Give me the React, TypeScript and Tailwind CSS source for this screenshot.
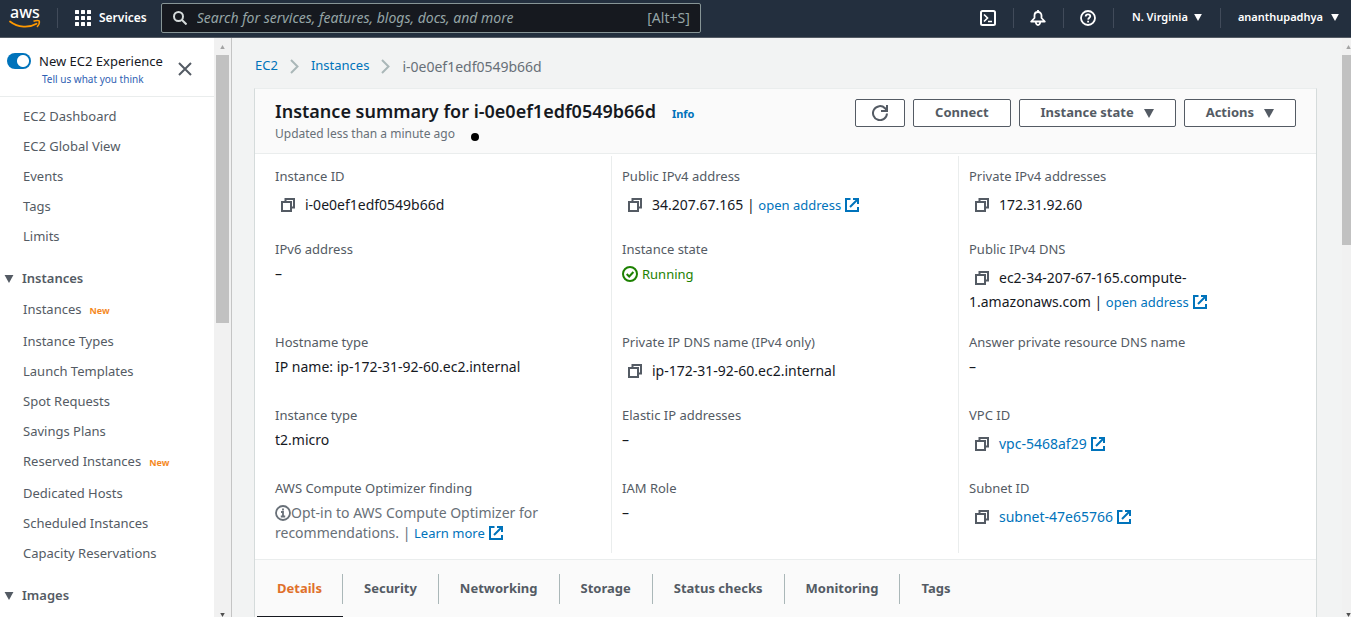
import type { ReactNode } from "react";

function Caret({ className = "" }: { className?: string }) {
  return (
    <svg viewBox="0 0 10 9" className={className} fill="currentColor" aria-hidden="true">
      <path d="M0 0h10L5 9z" />
    </svg>
  );
}

function CopyIcon() {
  return (
    <svg viewBox="0 0 14 14" className="size-3.5" fill="none" stroke="#545b64" strokeWidth="2" aria-hidden="true">
      <path d="M1 4h9v9H1z" />
      <path d="M4.500 4V1H13v8.500H10" />
    </svg>
  );
}

function ExternalIcon() {
  return (
    <svg viewBox="0 0 14 14" className="ml-1 inline size-3.5 align-[-2px]" fill="none" stroke="#0073bb" strokeWidth="2" aria-hidden="true">
      <path d="M5.500 1H1v12h12V9" />
      <path d="M8 1h5v5M13 1 5 9" />
    </svg>
  );
}

function Logo() {
  return (
    <svg viewBox="0 0 32 28" className="h-7 w-8 overflow-visible" role="img" aria-label="aws">
      <text x="2" y="14" fill="#fff" fontFamily="Noto Sans, sans-serif" fontWeight="500" fontSize="16">aws</text>
      <path d="M2 17.500c8 6.200 19 6.600 26.500 2.200" fill="none" stroke="#ff9900" strokeWidth="1.800" strokeLinecap="round" />
      <path d="M25.500 17.300c2.500-.9 5-1 5.800-.3.300 1.500-.6 4.300-2.300 6" fill="none" stroke="#ff9900" strokeWidth="1.500" />
    </svg>
  );
}

function Divider() {
  return <span className="h-5 w-px bg-[#414b5a]" />;
}

function TopBar() {
  const iconButton = "flex w-[49px] items-center justify-center";
  return (
    <header className="flex h-[38px] shrink-0 items-center border-b border-[#545b64] bg-[#232f3e] pb-0.5 text-white">
      <a href="#home" className="ml-2 mr-[17px]"><Logo /></a>
      <Divider />
      <button className="ml-[17px] flex items-center gap-2 text-[12px] font-semibold">
        <svg viewBox="0 0 16 16" className="size-4" fill="#fff" aria-hidden="true">
          {[0, 6, 12].map((y) => [0, 6, 12].map((x) => <rect key={`${x}-${y}`} x={x} y={y} width="4" height="4" rx="0.500" />))}
        </svg>
        Services
      </button>
      <label className="ml-3.5 flex h-[30px] w-[540px] items-center rounded-xs border border-[#879596] bg-[#16191f] pl-[11px] pr-2.5">
        <svg viewBox="0 0 14 14" className="mr-2.5 size-3.5 shrink-0" fill="none" stroke="#d5dbdb" strokeWidth="2" aria-hidden="true">
          <circle cx="5.500" cy="5.500" r="4.500" />
          <path d="m9 9 4.500 4.500" />
        </svg>
        <input
          aria-label="Search"
          placeholder="Search for services, features, blogs, docs, and more"
          className="min-w-0 flex-1 bg-transparent text-[14px] outline-none placeholder:italic placeholder:text-[#95a5a6]"
        />
        <span className="text-[14px] text-[#95a5a6]">[Alt+S]</span>
      </label>
      <div className="ml-auto flex items-center">
        <button aria-label="CloudShell" className={iconButton}>
          <svg viewBox="0 0 16 16" className="size-4" fill="none" stroke="#fff" strokeWidth="2" aria-hidden="true">
            <rect x="1" y="1" width="14" height="14" rx="1.500" />
            <path d="m4 4.500 3.500 3.500L4 11.500M8 11.500h4" strokeWidth="1.700" />
          </svg>
        </button>
        <Divider />
        <button aria-label="Notifications" className={iconButton}>
          <svg viewBox="0 0 16 16" className="size-4" fill="none" stroke="#fff" strokeWidth="1.800" strokeLinejoin="round" aria-hidden="true">
            <path d="M8 0v2M8 2C5.800 2 4.500 3.600 4.500 5.500V8L1.200 11.500h13.600L11.500 8V5.500C11.500 3.600 10.200 2 8 2z" />
            <path d="M5.800 12c.2 2 1 3 2.200 3s2-1 2.200-3" />
          </svg>
        </button>
        <Divider />
        <button aria-label="Help" className={iconButton}>
          <svg viewBox="0 0 16 16" className="size-4" fill="none" stroke="#fff" strokeWidth="1.800" aria-hidden="true">
            <circle cx="8" cy="8" r="7" />
            <path d="M5.700 6.500C5.700 5.100 6.700 4.300 8 4.300s2.300.8 2.300 2S8.300 8 8.100 9.700M8.100 10.700v1.800" />
          </svg>
        </button>
        <Divider />
        <button className="flex items-center gap-1.5 px-[18px] text-[11px] font-semibold">
          N. Virginia <Caret className="h-[7px] w-2" />
        </button>
        <Divider />
        <button className="flex items-center gap-2 pl-[17px] pr-3 text-[11px] font-semibold">
          ananthupadhya <Caret className="h-[7px] w-2" />
        </button>
      </div>
    </header>
  );
}

function NavItem({ label, isNew }: { label: string; isNew?: boolean }) {
  return (
    <li className={isNew ? "mb-0.5" : ""}>
      <a href="#nav" className="flex h-[30px] items-center pl-[23px] text-[13px] text-[#545b64]">
        {label}
        {isNew && <span className="ml-2 pt-0.5 text-[9px] font-bold text-[#f58a1f]">New</span>}
      </a>
    </li>
  );
}

function NavSection({ title, children }: { title: string; children?: ReactNode }) {
  return (
    <section className="mt-[11px]">
      <button className="flex h-8 items-center gap-2 pl-1 text-[13px] font-semibold text-[#545b64]">
        <Caret className="h-2 w-2.5" />
        {title}
      </button>
      <ul>{children}</ul>
    </section>
  );
}

function Sidebar() {
  return (
    <aside className="flex w-[232px] shrink-0 border-r border-[#c4c4c4] bg-white">
      <div className="min-w-0 flex-1 overflow-hidden">
        <div className="flex h-[59px] items-center border-b border-[#eaeded] pl-[7px]">
          <input
            id="experience"
            type="checkbox"
            role="switch"
            defaultChecked
            className="mb-3 h-4 w-6 shrink-0 appearance-none rounded-full bg-[#0073bb] bg-[radial-gradient(circle_at_16px_8px,white_5.500px,transparent_6.500px)]"
          />
          <div className="ml-2 whitespace-nowrap pt-[3px]">
            <label htmlFor="experience" className="block text-[13px] leading-5 text-[#16191f]">New EC2 Experience</label>
            <a href="#feedback" className="ml-[3px] block text-[10px] leading-4 text-[#2f5fb3]">Tell us what you think</a>
          </div>
          <button aria-label="Close" className="ml-auto mr-[22px] mt-1">
            <svg viewBox="0 0 14 14" className="size-3.5" stroke="#545b64" strokeWidth="2" aria-hidden="true">
              <path d="m1 1 12 12M13 1 1 13" />
            </svg>
          </button>
        </div>
        <nav aria-label="EC2">
          <ul className="pt-[5px]">
            {["EC2 Dashboard", "EC2 Global View", "Events", "Tags", "Limits"].map((l) => <NavItem key={l} label={l} />)}
          </ul>
          <NavSection title="Instances">
            <NavItem label="Instances" isNew />
            <NavItem label="Instance Types" />
            <NavItem label="Launch Templates" />
            <NavItem label="Spot Requests" />
            <NavItem label="Savings Plans" />
            <NavItem label="Reserved Instances" isNew />
            <NavItem label="Dedicated Hosts" />
            <NavItem label="Scheduled Instances" />
            <NavItem label="Capacity Reservations" />
          </NavSection>
          <NavSection title="Images" />
        </nav>
      </div>
      <div className="flex w-[17px] flex-col items-center bg-[#f1f1f1]" aria-hidden="true">
        <Caret className="mb-1.5 mt-[7px] h-1 w-[7px] rotate-180 text-[#a3a3a3]" />
        <div className="h-[268px] w-[13px] bg-[#c1c1c1]" />
        <Caret className="mt-auto h-1 w-[7px] text-[#505050]" />
      </div>
    </aside>
  );
}

function Field({ label, copy, children }: { label: string; copy?: boolean; children?: ReactNode }) {
  return (
    <div className="min-h-[73px] border-[#eaeded] px-2.5 pb-2 pt-2.5 text-[14px] [&:not(:nth-child(3n))]:border-r [&:nth-child(n+13)]:pb-2.5">
      <dt className="text-[13px] leading-5 text-[#545b64]">{label}</dt>
      {copy ? (
        <dd className="mt-[7px] leading-6 text-[#16191f]">
          <button aria-label={`Copy ${label}`} className="ml-1.5 mr-2.5 inline-block align-[-2px]"><CopyIcon /></button>
          {children}
        </dd>
      ) : (
        <dd className="mt-[5px] leading-5 text-[#16191f]">{children ?? "–"}</dd>
      )}
    </div>
  );
}

function ExtLink({ small, children }: { small?: boolean; children: ReactNode }) {
  return (
    <a href="#open" className={`whitespace-nowrap text-[#0073bb] ${small ? "text-[13px]" : ""}`}>
      {children}
      <ExternalIcon />
    </a>
  );
}

const buttonClass =
  "flex h-7 items-center rounded-xs border border-[#545b64] bg-white px-[21px] text-[13px] font-bold text-[#545b64]";

function Chevron() {
  return (
    <svg viewBox="0 0 9 15" className="h-[15px] w-[9px]" fill="none" stroke="#aab7b8" strokeWidth="2" aria-hidden="true">
      <path d="m1 1 6.500 6.500L1 14" />
    </svg>
  );
}

function SummaryCard() {
  const tabs = ["Details", "Security", "Networking", "Storage", "Status checks", "Monitoring", "Tags"];
  return (
    <section className="border border-[#d5dbdb] border-t-[#eaeded] bg-white">
      <div className="flex h-[65px] items-start justify-between border-b border-[#eaeded] bg-[#fafafa] pl-5 pr-5 pt-2.5">
        <div>
          <h1 className="flex items-baseline gap-4 text-[18px] font-semibold leading-6 text-[#16191f]">
            Instance summary for i-0e0ef1edf0549b66d
            <a href="#info" className="text-[11px] font-bold text-[#0073bb]">Info</a>
          </h1>
          <p className="flex items-center text-[12px] leading-4 text-[#687078]">
            Updated less than a minute ago
            <span className="ml-4 mt-1.5 size-2 rounded-full bg-black" />
          </p>
        </div>
        <div className="flex gap-2">
          <button aria-label="Refresh" className={`${buttonClass} w-[50px] justify-center`}>
            <svg viewBox="0 0 16 16" className="size-4 shrink-0" fill="none" stroke="#545b64" strokeWidth="2" aria-hidden="true">
              <path d="M15 8.500A7 7 0 1 1 13 3.200l1.500 1.800" />
              <path d="M15 0v6H9" />
            </svg>
          </button>
          <button className={buttonClass}>Connect</button>
          <button className={`${buttonClass} gap-2.5`}>Instance state <Caret className="h-[9px] w-2.5" /></button>
          <button className={`${buttonClass} gap-2.5`}>Actions <Caret className="h-[9px] w-2.5" /></button>
        </div>
      </div>
      <dl className="mx-2.5 mb-1.5 mt-0.5 grid grid-cols-3">
        <Field label="Instance ID" copy>i-0e0ef1edf0549b66d</Field>
        <Field label="Public IPv4 address" copy>34.207.67.165 | <ExtLink small>open address</ExtLink></Field>
        <Field label="Private IPv4 addresses" copy>172.31.92.60</Field>
        <Field label="IPv6 address" />
        <Field label="Instance state">
          <span className="flex items-center gap-1 text-[13px] text-[#1d8102]">
            <svg viewBox="0 0 16 16" className="size-4" fill="none" stroke="#1d8102" strokeWidth="2" aria-hidden="true">
              <circle cx="8" cy="8" r="7" />
              <path d="m4.700 8 2.500 2.500 4.200-4.500" />
            </svg>
            Running
          </span>
        </Field>
        <Field label="Public IPv4 DNS" copy>
          ec2-34-207-67-165.compute-<wbr />1.amazonaws.com | <ExtLink small>open address</ExtLink>
        </Field>
        <Field label="Hostname type">IP name: ip-172-31-92-60.ec2.internal</Field>
        <Field label="Private IP DNS name (IPv4 only)" copy>ip-172-31-92-60.ec2.internal</Field>
        <Field label="Answer private resource DNS name" />
        <Field label="Instance type">t2.micro</Field>
        <Field label="Elastic IP addresses" />
        <Field label="VPC ID" copy><ExtLink>vpc-5468af29</ExtLink></Field>
        <Field label="AWS Compute Optimizer finding">
          <span className="text-[#687078]">
            <svg viewBox="0 0 16 16" className="inline size-4 align-[-3px]" fill="none" stroke="#687078" strokeWidth="1.800" aria-hidden="true">
              <circle cx="8" cy="8" r="7" />
              <path d="M8 3.500v2M6 7h2v4.500M5.800 11.500h4.400" />
            </svg>
            Opt-in to AWS Compute Optimizer for recommendations. | <ExtLink small>Learn more</ExtLink>
          </span>
        </Field>
        <Field label="IAM Role" />
        <Field label="Subnet ID" copy><ExtLink>subnet-47e65766</ExtLink></Field>
      </dl>
      <div role="tablist" className="flex h-[59px] items-stretch border-t border-[#eaeded] bg-[#fafafa] pl-0.5">
        {tabs.map((tab, i) => (
          <button
            key={tab}
            role="tab"
            aria-selected={i === 0}
            className={`flex items-center border-b-2 pt-0.5 text-[13px] font-bold ${i === 0 ? "border-[#16191f] text-[#e0702a]" : "border-transparent text-[#545b64]"}`}
          >
            <span className={`flex h-[30px] items-center ${i === 0 ? "px-5" : "px-[21px]"} ${i < tabs.length - 1 ? "border-r border-[#aab7b8]" : ""}`}>{tab}</span>
          </button>
        ))}
      </div>
    </section>
  );
}

export default function App() {
  return (
    <div className="flex h-screen flex-col overflow-hidden bg-[#f2f3f3] font-['Noto_Sans',sans-serif]">
      <TopBar />
      <div className="flex min-h-0 flex-1">
        <Sidebar />
        <main className="min-w-0 flex-1 overflow-hidden pl-[22px] pr-[25px]">
          <nav aria-label="Breadcrumb" className="flex h-[50px] items-center gap-3 pl-px pt-1.5 text-[13px]">
            <a href="#ec2" className="text-[#0073bb]">EC2</a>
            <Chevron />
            <a href="#instances" className="text-[#0073bb]">Instances</a>
            <Chevron />
            <span className="text-[14px] text-[#687078]">i-0e0ef1edf0549b66d</span>
          </nav>
          <SummaryCard />
        </main>
        <div className="flex w-[9px] shrink-0 flex-col bg-[#f1f1f1]" aria-hidden="true">
          <Caret className="mb-1.5 ml-[3px] mt-[7px] h-1 w-[7px] rotate-180 text-[#a3a3a3]" />
          <div className="h-[190px] bg-[#c1c1c1]" />
          <Caret className="ml-[3px] mt-auto h-1 w-[7px] text-[#505050]" />
        </div>
      </div>
    </div>
  );
}
